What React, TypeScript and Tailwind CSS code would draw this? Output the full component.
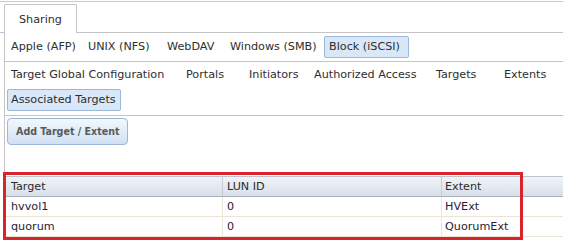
import React from 'react';

const shareTypes = [
  { label: 'Apple (AFP)', w: 'w-[77px]' },
  { label: 'UNIX (NFS)', w: 'w-[79px]' },
  { label: 'WebDAV', w: 'w-[63px]' },
  { label: 'Windows (SMB)', w: 'w-[94px]' },
];

const iscsiTabs = [
  { label: 'Target Global Configuration', w: 'w-[175px]' },
  { label: 'Portals', w: 'w-[63px]' },
  { label: 'Initiators', w: 'w-[65px]' },
  { label: 'Authorized Access', w: 'w-[122px]' },
  { label: 'Targets', w: 'w-[68px]' },
  { label: 'Extents', w: 'w-[60px]' },
];

const rows = [
  { target: 'hvvol1', lun: '0', extent: 'HVExt' },
  { target: 'quorum', lun: '0', extent: 'QuorumExt' },
];

export default function App() {
  return (
    <div
      className="relative w-[563px] h-[252px] overflow-hidden bg-white text-[11.2px] text-[#2e2e2e]"
      style={{ fontFamily: '"DejaVu Sans", Verdana, sans-serif' }}
    >
      <div className="mt-[1px] h-px bg-[#cacaca]" />

      {/* Top tab strip */}
      <div className="flex items-end h-[31px]">
        <div className="w-[4px] h-full border-b border-[#c4c4c4]" />
        <div className="w-[73px] h-[29px] border-l border-t border-r border-[#c4c4c4] rounded-t-[2px] flex items-center pl-[14px] pt-[2px] bg-white">
          Sharing
        </div>
        <div className="flex-1 h-full border-b border-[#c4c4c4]" />
      </div>

      {/* Panel */}
      <div className="ml-[4px] border-l border-[#c4c4c4]">
        {/* Share types */}
        <div className="h-[29px] border-b border-[#c4c4c4] flex items-center pl-[6px]">
          {shareTypes.map((s) => (
            <span key={s.label} className={`${s.w} shrink-0 whitespace-nowrap`}>
              {s.label}
            </span>
          ))}
          <span className="w-[85px] h-[22px] pl-[4px] flex items-center bg-[#d9e8f8] border border-[#9db8d6] rounded-[2px] whitespace-nowrap">
            Block (iSCSI)
          </span>
        </div>

        {/* iSCSI sub tabs */}
        <div className="h-[54px] border-b border-[#c4c4c4] pt-[4px] pb-[4px]">
          <div className="h-[18px] flex items-center pl-[6px] pt-[1px]">
            {iscsiTabs.map((t) => (
              <span key={t.label} className={`${t.w} shrink-0 whitespace-nowrap`}>
                {t.label}
              </span>
            ))}
          </div>
          <div className="mt-[5px] ml-[2px] w-[114px] h-[22px] flex items-center pl-[3px] bg-[#d9e8f8] border border-[#9db8d6] rounded-[2px] whitespace-nowrap">
            Associated Targets
          </div>
        </div>

        {/* Add button */}
        <div className="pt-[2px] pl-[2px] h-[60px]">
          <div className="w-[121px] h-[27px] flex items-center pl-[8px] bg-gradient-to-b from-[#f4f8fd] to-[#cfe0f3] border border-[#9db8d6] rounded-[4px] font-bold text-[#5a5a5a] text-[10.6px] whitespace-nowrap font-['DejaVu_Sans_Condensed',Verdana,sans-serif]">
            Add Target / Extent
          </div>
        </div>

        {/* Table */}
        <div className="text-[#2a1c36]">
          <div className="grid grid-cols-[218px_219px_1fr] h-[21px] border-t border-b border-t-[#bcc4ce] border-b-[#a9b2bd] bg-gradient-to-b from-[#f1f4f8] to-[#d7dfe9] text-[#2b2b2b]">
            <div className="flex items-center pl-[6px] pt-[2px] border-r border-[#c5ced9]">Target</div>
            <div className="flex items-center pl-[4px] pt-[2px] border-r border-[#c5ced9]">LUN ID</div>
            <div className="flex items-center pl-[3px] pt-[2px]">Extent</div>
          </div>
          {rows.map((r) => (
            <div
              key={r.target}
              className="grid grid-cols-[218px_219px_1fr] h-[20px] border-b border-[#ece4d7]"
            >
              <div className="flex items-center pl-[6px] pt-[2px] border-r border-[#ece4d7]">{r.target}</div>
              <div className="flex items-center pl-[4px] pt-[2px] border-r border-[#ece4d7]">{r.lun}</div>
              <div className="flex items-center pl-[3px] pt-[2px]">{r.extent}</div>
            </div>
          ))}
        </div>
      </div>

      {/* Highlight annotation */}
      <div className="absolute left-[3px] top-[172px] w-[520px] h-[68px] border-[3px] border-[#d8252c] pointer-events-none" />
    </div>
  );
}
